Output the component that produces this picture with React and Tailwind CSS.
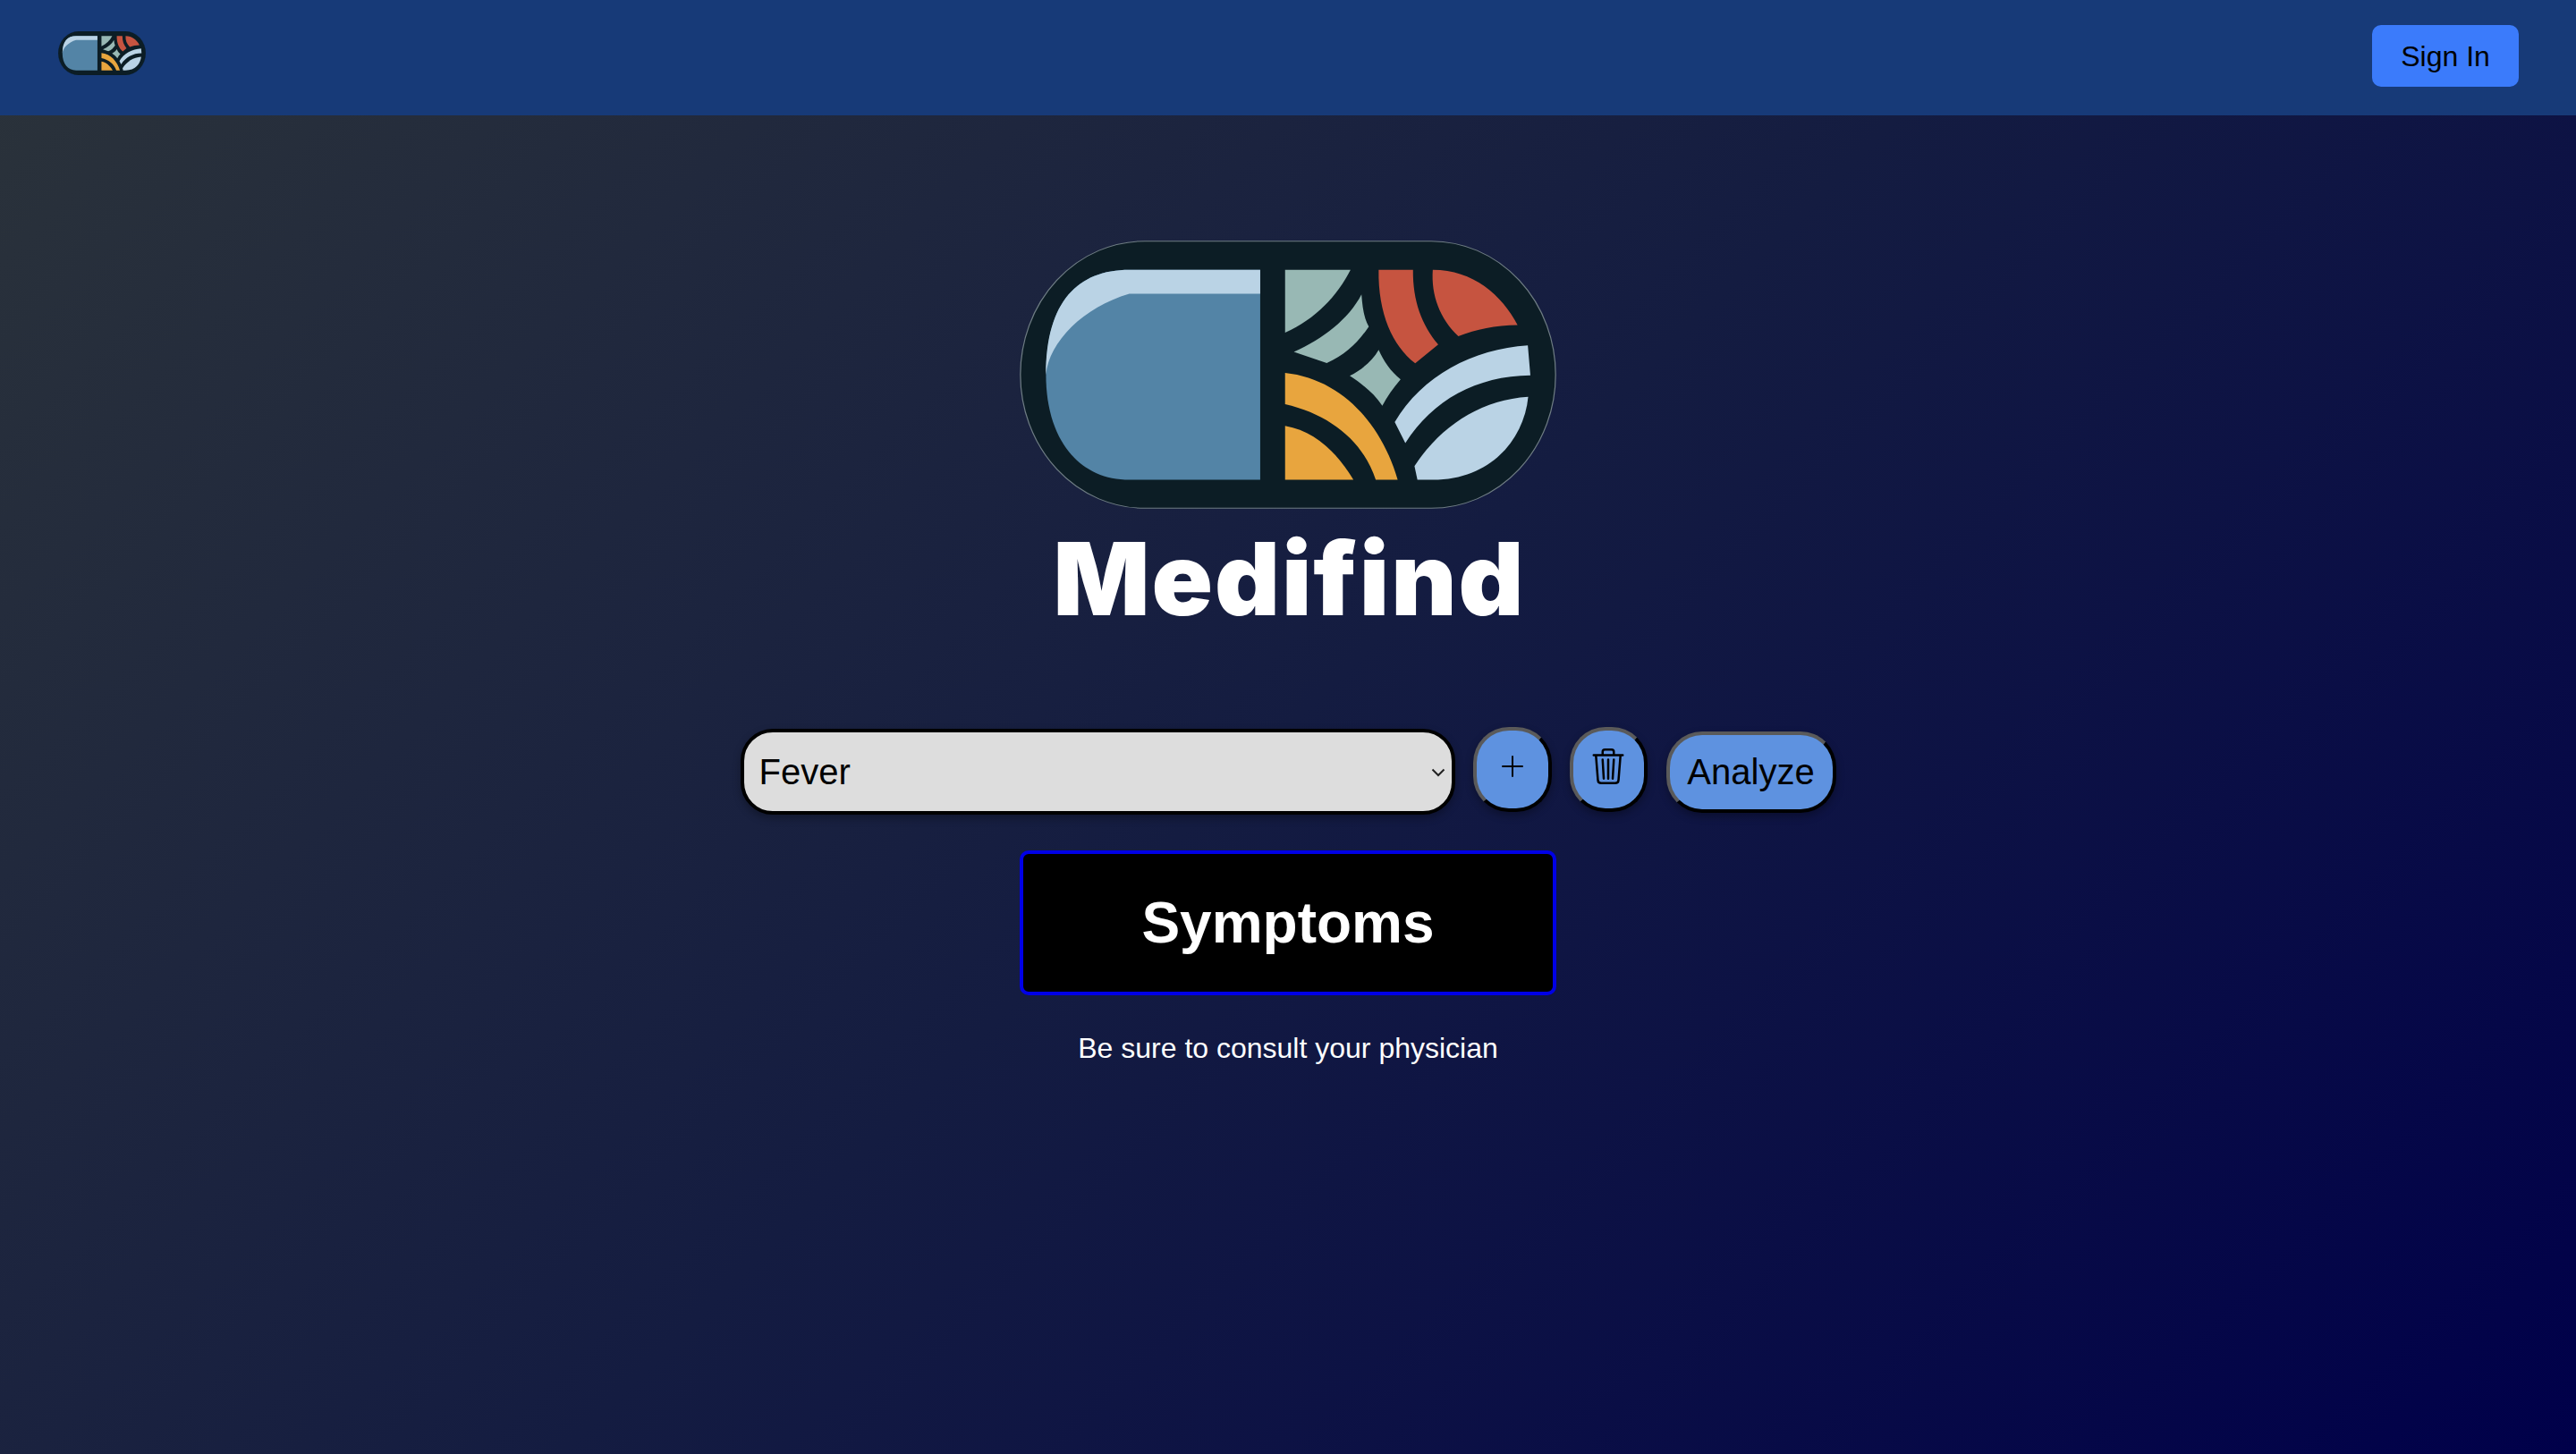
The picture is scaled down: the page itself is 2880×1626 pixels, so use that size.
import React from 'react';
import { BsPlusLg, BsTrash3 } from 'react-icons/bs';

// drawn in the coordinates of a 1468x898 sketch, stretched to a 2:1 pill
function PillLogo({ className, edge }) {
  return (
    <svg viewBox="50 57 1468 898" preserveAspectRatio="none" className={className}>
      <rect x="52" y="59" width="1464" height="894" rx="340" ry="447" fill="#0c1d25" stroke={edge} strokeWidth="3" />
      <path d="M708 155H350C210 155 122 260 122 507C122 720 210 858 350 858H708Z" fill="#5384a6" />
      <path d="M708 155H350C210 155 122 260 122 507C130 395 225 280 350 235H708Z" fill="#bad3e5" />
      <path d="M776 155H955C920 240 860 320 776 365Z" fill="#98b8b4" />
      <path d="M985 237C988 285 993 320 1005 345C975 400 940 440 890 467L800 430C880 385 950 320 985 237Z" fill="#98b8b4" />
      <path d="M1032 423C1045 460 1065 495 1092 522C1072 550 1055 580 1042 610C1020 570 990 540 953 510C985 490 1015 460 1032 423Z" fill="#98b8b4" />
      <path d="M1032 155H1126C1125 260 1150 340 1195 405L1132 468C1070 410 1030 300 1032 155Z" fill="#c65440" />
      <path d="M1180 155C1290 155 1370 240 1412 340C1350 340 1300 355 1250 377C1200 320 1175 240 1180 155Z" fill="#c65440" />
      <path d="M776 500C930 520 1040 670 1084 858H1024C990 730 900 640 776 605Z" fill="#e8a53e" />
      <path d="M776 677C860 695 920 770 963 858H776Z" fill="#e8a53e" />
      <path d="M1440 408L1447 508C1300 510 1180 590 1105 735L1076 665C1150 510 1290 420 1440 408Z" fill="#bad3e5" />
      <path d="M1441 580C1430 720 1340 858 1180 858H1138L1130 812C1200 680 1310 590 1441 580Z" fill="#bad3e5" />
    </svg>
  );
}

const outset = 'border-4 border-t-[#5a5a5a] border-l-[#5a5a5a] border-r-black border-b-black bg-[#5e92e0] text-black shadow-[0_4px_10px_rgba(0,0,0,0.3)]';

export default function App() {
  return (
    <div className="min-h-[1626px] flex flex-col bg-[linear-gradient(135deg,#2b333a,#141c41_50%,#00004a)] font-['Liberation_Sans',Arial,sans-serif]">
      <header className="h-[129px] flex items-center justify-between pl-[65px] pr-[64px] bg-[#173a78]">
        <PillLogo className="w-[98px] h-[49px] -mt-[10px]" edge="#0c1d25" />
        <button className="w-[164px] h-[69px] -mt-[4px] rounded-[10px] bg-[#3b7bfb] text-black text-[32px]">Sign In</button>
      </header>

      <main className="flex flex-col items-center pt-[140px]">
        <PillLogo className="w-[600px] h-[300px]" edge="#6f7d84" />
        <h1 className="mt-[18px] pl-[3px] text-[113px] leading-[120px] font-black tracking-[2px] text-white font-['Inter',sans-serif]">Medifind</h1>

        <div className="mt-[108px] flex items-center gap-5">
          <div className="relative">
            <select defaultValue="Fever" className="w-[799px] h-[96px] pl-[17px] pr-10 appearance-none rounded-[36px] border-4 border-black bg-[#dddddd] text-black text-[40px] shadow-[0_4px_10px_rgba(0,0,0,0.3)]">
              <option>Fever</option>
              <option>Cough</option>
              <option>Headache</option>
            </select>
            <svg viewBox="0 0 16 10" className="absolute right-[11px] top-[44px] w-[16px] h-[10px]" fill="none" stroke="#222" strokeWidth="2">
              <path d="M1.5 1.5L8 8L14.5 1.5" />
            </svg>
          </div>
          <button className={`w-[88px] h-[95px] -mt-[6px] rounded-[40px] flex items-center justify-center ${outset}`}>
            <BsPlusLg size={32} className="-mt-[6px]" />
          </button>
          <button className={`w-[87px] h-[95px] -mt-[6px] rounded-[40px] flex items-center justify-center ${outset}`}>
            <BsTrash3 size={40} className="-mt-[6px]" />
          </button>
          <button className={`w-[190px] h-[91px] ml-px rounded-[40px] text-[40px] ${outset}`}>Analyze</button>
        </div>

        <div className="mt-[40px] w-[600px] h-[162px] flex items-center justify-center rounded-[10px] border-4 border-[#0000e6] bg-black">
          <h2 className="text-[64px] font-bold text-white">Symptoms</h2>
        </div>
        <p className="mt-[35px] text-[32px] text-white">Be sure to consult your physician</p>
      </main>
    </div>
  );
}
